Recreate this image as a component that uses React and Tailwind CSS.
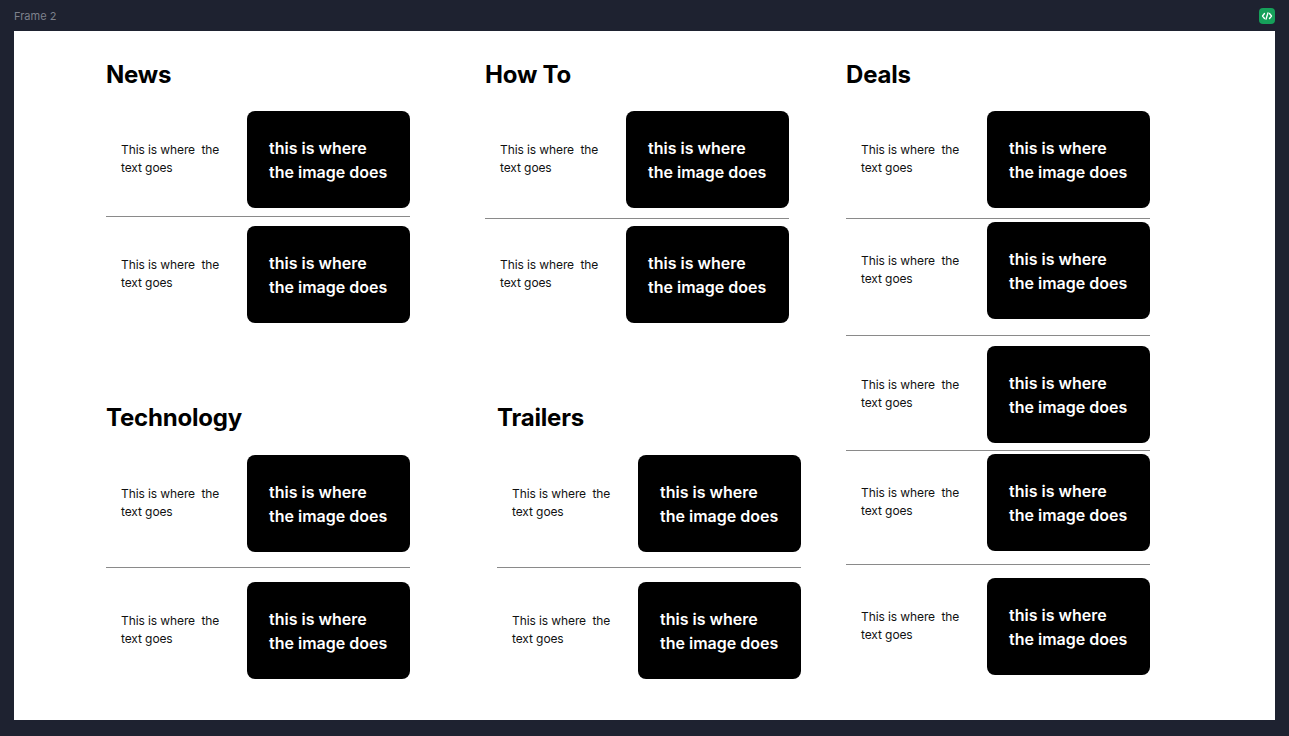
import React from "react";

const Row = ({ mt = "" }) => (
  <div className={`flex items-center ${mt}`}>
    <div className="w-[141px] shrink-0 pl-[15px] pb-[2px] text-[12px] leading-[18px] tracking-[-0.1px] text-[#111] whitespace-pre">
      {"This is where  the\ntext goes"}
    </div>
    <div className="w-[163px] h-[97px] shrink-0 rounded-[8px] bg-black flex items-center pl-[22px]">
      <p className="text-white text-[16px] leading-[24px] font-semibold">
        this is where
        <br />
        the image does
      </p>
    </div>
  </div>
);

const Divider = ({ mt = "" }) => <div className={`w-[304px] shrink-0 h-px bg-[#8a8a8a] ${mt}`} />;

const Heading = ({ children, mt = "" }) => (
  <h2 className={`h-8 text-[24px] leading-8 font-bold tracking-[-0.2px] text-black ${mt}`}>{children}</h2>
);

const App = () => {
  return (
    <div
      className="w-[1289px] h-[736px] bg-[#1e2230] flex flex-col"
      style={{ fontFamily: "Inter, 'Noto Sans', sans-serif" }}
    >
      {/* top bar */}
      <div className="h-[31px] flex items-center justify-between px-[14px]">
        <span className="text-[11px] text-[#7d818c] pt-[2px]">Frame 2</span>
        <div className="w-4 h-4 rounded-[4px] bg-[#16a05a] flex items-center justify-center">
          <svg width="12" height="10" viewBox="0 0 12 10" fill="none" stroke="white" strokeWidth="1.3" strokeLinecap="round" strokeLinejoin="round">
            <path d="M3.5 2.5 1.5 5l2 2.5" />
            <path d="M8.5 2.5 10.5 5l-2 2.5" />
            <path d="M7 1.8 5 8.2" />
          </svg>
        </div>
      </div>

      {/* frame */}
      <div className="mx-[14px] h-[689px] bg-white flex">
        {/* left column */}
        <div className="ml-[92px] w-[304px] shrink-0 pt-[28px] flex flex-col">
          <Heading>News</Heading>
          <Row mt="mt-[20px]" />
          <Divider mt="mt-[8px]" />
          <Row mt="mt-[9px]" />
          <Heading mt="mt-[79px]">Technology</Heading>
          <Row mt="mt-[21px]" />
          <Divider mt="mt-[15px]" />
          <Row mt="mt-[14px]" />
        </div>

        {/* middle column */}
        <div className="ml-[75px] w-[304px] shrink-0 pt-[28px] flex flex-col">
          <Heading>How To</Heading>
          <Row mt="mt-[20px]" />
          <Divider mt="mt-[10px]" />
          <Row mt="mt-[7px]" />
          <div className="ml-[12px] w-[304px] shrink-0 flex flex-col">
            <Heading mt="mt-[79px]">Trailers</Heading>
            <Row mt="mt-[21px]" />
            <Divider mt="mt-[15px]" />
            <Row mt="mt-[14px]" />
          </div>
        </div>

        {/* right column */}
        <div className="ml-[57px] w-[304px] shrink-0 pt-[28px] flex flex-col">
          <Heading>Deals</Heading>
          <Row mt="mt-[20px]" />
          <Divider mt="mt-[10px]" />
          <Row mt="mt-[3px]" />
          <Divider mt="mt-[16px]" />
          <Row mt="mt-[10px]" />
          <Divider mt="mt-[7px]" />
          <Row mt="mt-[3px]" />
          <Divider mt="mt-[13px]" />
          <Row mt="mt-[13px]" />
        </div>
      </div>
    </div>
  );
};

export default App;
